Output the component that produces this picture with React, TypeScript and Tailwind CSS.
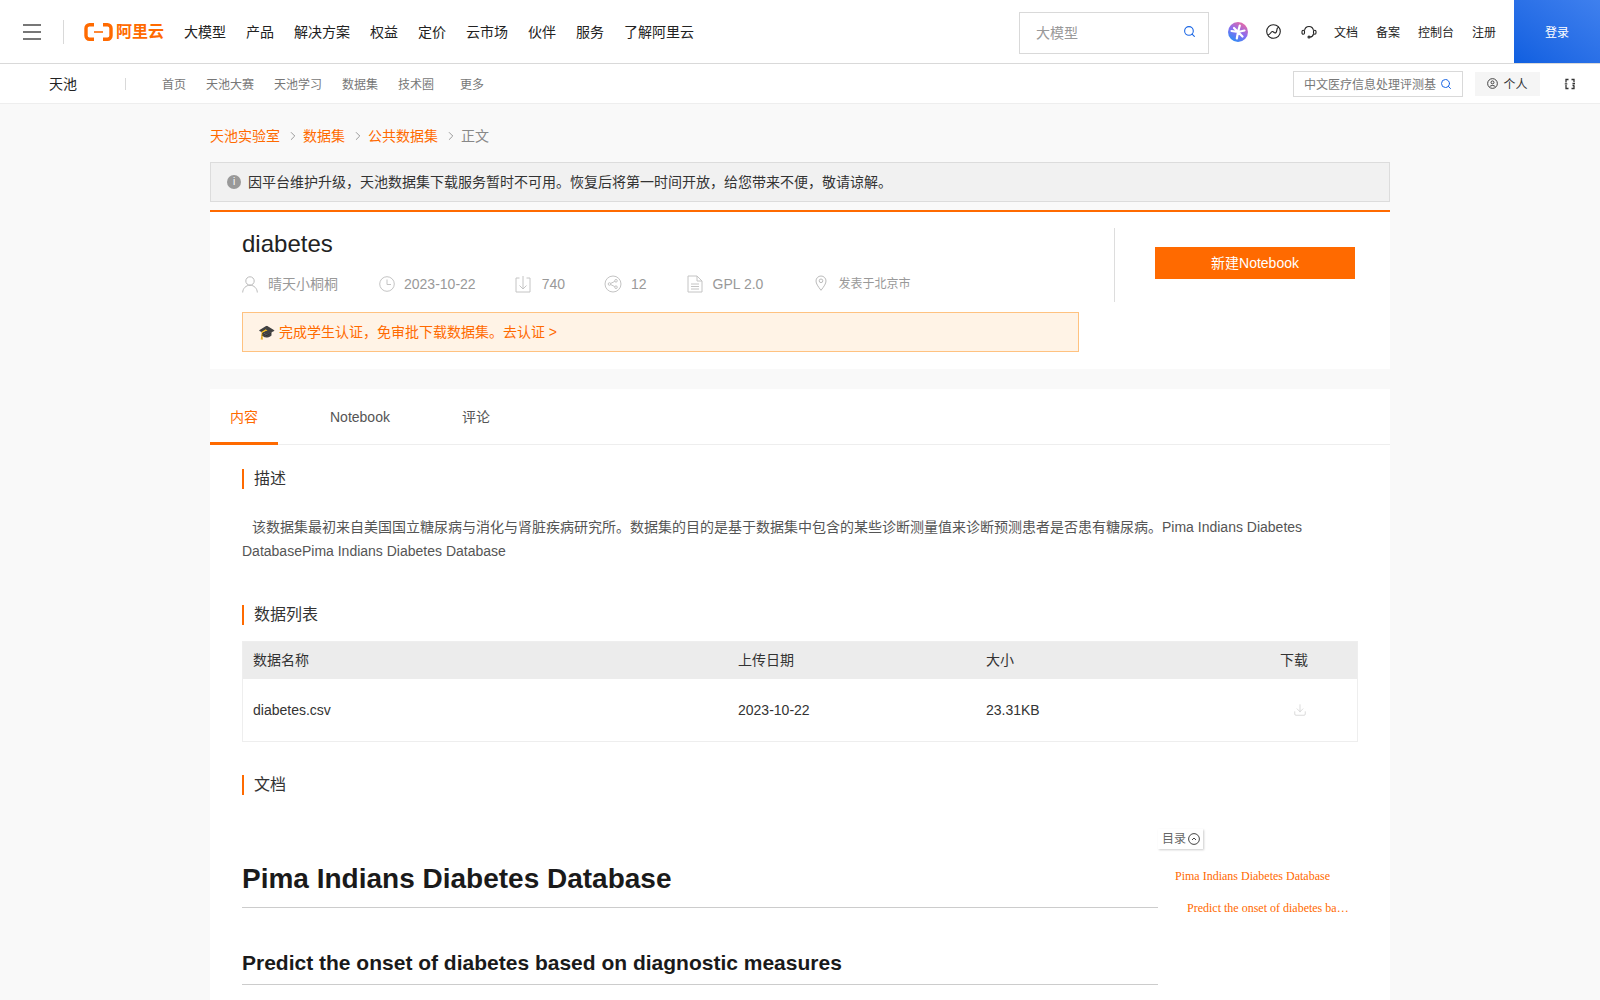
import { Search, ChevronRight, Download } from "lucide-react";

const mainNav = ["大模型", "产品", "解决方案", "权益", "定价", "云市场", "伙伴", "服务", "了解阿里云"];
const subNav = [
	{ title: "首页", cls: "ml-[36px]" },
	{ title: "天池大赛", cls: "ml-[20px]" },
	{ title: "天池学习", cls: "ml-[20px]" },
	{ title: "数据集", cls: "ml-[20px]" },
	{ title: "技术圈", cls: "ml-[20px]" },
	{ title: "更多", cls: "ml-[26px]" },
];

const Logo = () => (
	<div className="flex items-center gap-[3px]">
		<svg width="29" height="18" viewBox="0 0 29 18" fill="none" stroke="#ff6a00" strokeWidth="3.400" className="shrink-0">
			<path d="M10 1.700H5.500a3.500 3.500 0 0 0-3.500 3.500v7.600a3.500 3.500 0 0 0 3.500 3.500H10" />
			<path d="M19 1.700h4.500a3.500 3.500 0 0 1 3.500 3.500v7.600a3.500 3.500 0 0 1-3.500 3.500H19" />
			<path d="M10 9h9" strokeWidth="1.600" />
		</svg>
		<span className="whitespace-nowrap text-[16px] font-bold leading-[18px] text-[#ff6a00]">阿里云</span>
	</div>
);

const SectionTitle = ({ title }: { title: string }) => (
	<h3 className="border-l-2 border-[#ff6a00] pl-[10px] text-[16px] leading-[20px] text-[#333]">{title}</h3>
);

export default function App() {
	return (
		<div className="h-[1000px] overflow-hidden bg-[#f9f9f9] font-['Liberation_Sans','Noto_Sans_CJK_SC',sans-serif] text-[14px] text-[#333]">
			<header className="flex h-[64px] items-center border-b border-[#d9d9d9] bg-white">
				<div className="ml-[23px] flex w-[18px] flex-col gap-[5px]">
					<span className="h-[2px] bg-[#777]" />
					<span className="h-[2px] bg-[#777]" />
					<span className="h-[2px] bg-[#777]" />
				</div>
				<span className="ml-[22px] h-[24px] w-px bg-[#d9d9d9]" />
				<div className="ml-[20px] w-[80px]">
					<Logo />
				</div>
				<nav className="ml-[20px] flex gap-[20px] pt-[2px] text-[14px] text-[#222]">
					{mainNav.map((item) => (
						<span key={item}>{item}</span>
					))}
				</nav>
				<div className="ml-auto mt-[2px] flex h-[42px] w-[190px] items-center justify-between border border-[#d9d9d9] pl-[16px] pr-[12px] text-[14px] text-[#999]">
					<span className="pt-[1px]">大模型</span>
					<Search size={13} className="-translate-y-[1px] text-[#1a66e5]" />
				</div>
				<svg width="20" height="20" viewBox="0 0 20 20" fill="none" className="ml-[19px] shrink-0">
					<defs>
						<linearGradient id="star" x1="15" y1="1" x2="5" y2="19" gradientUnits="userSpaceOnUse">
							<stop stopColor="#e56aa8" />
							<stop offset="0.5" stopColor="#8a6cf0" />
							<stop offset="1" stopColor="#2f8cf5" />
						</linearGradient>
					</defs>
					<circle cx="10" cy="10" r="10" fill="url(#star)" />
					<path d="M10 10L11.800 3.500M10 10L16.500 8.500M10 10L14.500 14.500M10 10L8.800 16.500M10 10L3.500 9M10 10L6 6" stroke="white" strokeWidth="2.200" strokeLinecap="round" />
				</svg>
				<svg width="15" height="15" viewBox="0 0 15 15" fill="none" stroke="#222" strokeWidth="1.100" className="ml-[18px] shrink-0">
					<circle cx="7.500" cy="7.500" r="6.800" />
					<path d="M2 11c1.500-.2 2.200-1.500 3-2.500S6.500 7 7.500 8s1.500 1.500 2.500.5.800-3 1.200-4 1-1.200 1.800-1.200" />
				</svg>
				<svg width="16" height="16" viewBox="0 0 16 16" fill="none" stroke="#222" strokeWidth="1.100" className="ml-[20px] shrink-0">
					<path d="M3.500 6.500C4 3.800 5.800 2.500 8 2.500s4 1.300 4.500 4M12.500 10c-.5 2-2 3-3.500 3" />
					<rect x="1" y="6.200" width="2.500" height="4" rx="1.200" />
					<rect x="12.500" y="6.200" width="2.500" height="4" rx="1.200" />
					<circle cx="8" cy="13" r="1" />
				</svg>
				<div className="ml-[17px] flex gap-[18px] pt-[2px] text-[12px] text-[#222]">
					<span>文档</span>
					<span>备案</span>
					<span>控制台</span>
					<span>注册</span>
				</div>
				<div className="ml-[18px] flex h-full w-[86px] items-center justify-center bg-gradient-to-tr from-[#0f5fe0] to-[#3f80ee] pt-[2px] text-[12px] text-white">
					登录
				</div>
			</header>

			<div className="flex h-[40px] items-center border-b border-[#eeeeee] bg-white">
				<span className="ml-[49px] w-[76px] pt-[2px] text-[14px] text-[#222]">天池</span>
				<span className="h-[12px] w-px bg-[#d9d9d9]" />
				{subNav.map((item) => (
					<span key={item.title} className={`${item.cls} pt-[2px] text-[12px] text-[#777]`}>
						{item.title}
					</span>
				))}
				<div className="ml-auto flex h-[26px] w-[170px] items-center justify-between border border-[#d9d9d9] pl-[10px] pr-[10px] text-[12px] text-[#777]">
					<span className="w-[132px] overflow-hidden whitespace-nowrap pt-[2px]">中文医疗信息处理评测基</span>
					<Search size={12} className="text-[#1a66e5]" />
				</div>
				<div className="ml-[12px] flex h-[24px] w-[65px] items-center justify-center gap-[5px] bg-[#f5f5f5] text-[12px] text-[#333]">
					<svg width="11" height="11" viewBox="0 0 12 12" fill="none" stroke="#333">
						<circle cx="6" cy="6" r="5.300" />
						<circle cx="6" cy="4.800" r="1.600" />
						<path d="M3 9.500c1-1.800 5-1.800 6 0" />
					</svg>
					<span className="pt-[2px]">个人</span>
				</div>
				<svg width="12" height="12" viewBox="0 0 12 12" fill="none" stroke="#333" strokeWidth="1.300" className="mx-[24px] shrink-0">
					<path d="M4.500 1.500H2v3M2 7v3.500h2.500M7.500 1.500H10V4M10 8v2.500H7.500" />
					<path d="M.8 5.800h2.500M8.500 5.500h2.500M8.500 7.500h2" />
				</svg>
			</div>

			<main className="mx-auto w-[1180px]">
				<div className="flex h-[58px] items-center pt-[6px] text-[14px] text-[#ff6a00]">
					<span>天池实验室</span>
					<ChevronRight size={14} strokeWidth={1.100} className="ml-[6px] mr-[3px] text-[#666]" />
					<span>数据集</span>
					<ChevronRight size={14} strokeWidth={1.100} className="ml-[6px] mr-[3px] text-[#666]" />
					<span>公共数据集</span>
					<ChevronRight size={14} strokeWidth={1.100} className="ml-[6px] mr-[3px] text-[#666]" />
					<span className="text-[#888]">正文</span>
				</div>

				<div className="flex h-[40px] items-center gap-[7px] border border-[#dcdcdc] bg-[#f1f1f1] pl-[16px] text-[14px] text-[#333]">
					<span className="flex h-[14px] w-[14px] items-center justify-center rounded-full bg-[#999] text-[10px] leading-none text-white">
						i
					</span>
					因平台维护升级，天池数据集下载服务暂时不可用。恢复后将第一时间开放，给您带来不便，敬请谅解。
				</div>

				<section className="mt-[8px] flex h-[159px] border-t-2 border-[#ff6a00] bg-white pl-[32px]">
					<div className="w-[872px] pt-[15px]">
						<h1 className="text-[24px] leading-[34px] text-[#222]">diabetes</h1>
						<div className="mt-[12px] flex h-[22px] items-center text-[14px] text-[#999]">
							<svg width="16" height="17" viewBox="0 0 16 17" fill="none" stroke="#bbb">
								<circle cx="8" cy="5" r="4.200" />
								<path d="M.7 16.500c0-4 3.300-7.300 7.300-7.300s7.300 3.300 7.300 7.300" />
							</svg>
							<span className="ml-[10px]">晴天小桐桐</span>
							<svg width="16" height="16" viewBox="0 0 16 16" fill="none" stroke="#c4c4c4" className="ml-[41px]">
								<circle cx="8" cy="8" r="7.300" />
								<path d="M8 3.500V8.500H12" />
							</svg>
							<span className="ml-[9px]">2023-10-22</span>
							<svg width="16" height="18" viewBox="0 0 16 18" fill="none" stroke="#c4c4c4" className="ml-[39px]">
								<path d="M4.500 3H1v14h14V3h-3.500M8 1v13M4.500 10.500L8 14l3.500-3.500" />
							</svg>
							<span className="ml-[11px]">740</span>
							<svg width="18" height="18" viewBox="0 0 18 18" fill="none" stroke="#c4c4c4" className="ml-[39px]">
								<circle cx="9" cy="9" r="8" />
								<circle cx="5.500" cy="9" r="1.300" />
								<circle cx="12" cy="5.800" r="1.300" />
								<circle cx="12" cy="12.200" r="1.300" />
								<path d="M6.700 8.400l4.100-2M6.700 9.600l4.100 2" />
							</svg>
							<span className="ml-[9px]">12</span>
							<svg width="16" height="18" viewBox="0 0 16 18" fill="none" stroke="#c4c4c4" className="ml-[40px]">
								<path d="M1 1h9l5 5v11H1zM10 1v5h5M4 9h8M4 11.500h8M4 14h8" />
							</svg>
							<span className="ml-[10px]">GPL 2.0</span>
							<svg width="12" height="16" viewBox="0 0 12 16" fill="none" stroke="#bbb" className="ml-[52px] -translate-y-[1px]">
								<path d="M6 15.300C3 11.500 1 8.500 1 6a5 5 0 0 1 10 0c0 2.500-2 5.500-5 9.300z" />
								<circle cx="6" cy="5.800" r="1.800" />
							</svg>
							<span className="ml-[11px] text-[12px]">发表于北京市</span>
						</div>
						<div className="mt-[17px] flex h-[40px] w-[837px] items-center border border-[#ffc280] bg-[#fff3e6] pl-[15px] text-[14px] text-[#ff6a00]">
							🎓 完成学生认证，免审批下载数据集。去认证 &gt;
						</div>
					</div>
					<div className="mt-[16px] h-[74px] flex-1 border-l border-[#dddddd] pl-[40px] pt-[19px]">
						<button type="button" className="h-[32px] w-[200px] bg-[#ff6a00] text-[14px] text-white">
							新建Notebook
						</button>
					</div>
				</section>

				<section className="mt-[20px] bg-white pb-[40px]">
					<div className="flex h-[56px] border-b border-[#eeeeee] text-[14px] text-[#555]">
						<span className="flex h-[56px] w-[68px] items-center justify-center border-b-[3px] border-[#ff6a00] pt-[3px] text-[#ff6a00]">
							内容
						</span>
						<span className="ml-[52px] flex items-center pt-[1px]">Notebook</span>
						<span className="ml-[72px] flex items-center pt-[1px]">评论</span>
					</div>
					<div className="px-[32px] pt-[24px]">
						<SectionTitle title="描述" />
						<p className="mt-[26px] text-[14px] leading-[24px] text-[#555]">
							<span className="ml-[10px]" />该数据集最初来自美国国立糖尿病与消化与肾脏疾病研究所。数据集的目的是基于数据集中包含的某些诊断测量值来诊断预测患者是否患有糖尿病。Pima Indians Diabetes DatabasePima Indians Diabetes Database
						</p>
						<div className="mt-[42px]">
							<SectionTitle title="数据列表" />
						</div>
						<div className="mt-[16px] w-[1116px] border border-[#eeeeee] text-[14px] text-[#333]">
							<div className="grid h-[37px] grid-cols-[485px_248px_294px_1fr] items-center bg-[#ececec] pl-[10px]">
								<span>数据名称</span>
								<span>上传日期</span>
								<span>大小</span>
								<span>下载</span>
							</div>
							<div className="grid h-[62px] grid-cols-[485px_248px_294px_1fr] items-center pl-[10px]">
								<span>diabetes.csv</span>
								<span>2023-10-22</span>
								<span>23.31KB</span>
								<Download size={14} strokeWidth={1.200} className="ml-[13px] text-[#ccc]" />
							</div>
						</div>
						<div className="mt-[33px]">
							<SectionTitle title="文档" />
						</div>
						<div className="flex">
							<article className="w-[916px] pt-[64px]">
								<h1 className="border-b border-[#cccccc] pb-[8px] text-[28px] font-bold leading-[40px] text-[#1a1a1a]">
									Pima Indians Diabetes Database
								</h1>
								<h2 className="mt-[39px] border-b border-[#cccccc] pb-[5px] text-[21px] font-bold leading-[32px] text-[#1a1a1a]">
									Predict the onset of diabetes based on diagnostic measures
								</h2>
							</article>
							<aside className="w-[200px] pt-[34px]">
								<div className="flex h-[20px] w-[45px] items-center gap-[2px] pl-[4px] text-[12px] text-[#666] shadow-[1px_1px_2px_rgba(0,0,0,0.2)]">
									目录
									<svg width="12" height="12" viewBox="0 0 12 12" fill="none" stroke="#444">
										<circle cx="6" cy="6" r="5.400" />
										<path d="M4 7l2-2 2 2" />
									</svg>
								</div>
								<div className="mt-[18px] pl-[17px] font-['Liberation_Serif',serif] text-[12px] text-[#ff6a00]">
									Pima Indians Diabetes Database
								</div>
								<div className="mt-[14px] w-[191px] truncate pl-[29px] font-['Liberation_Serif',serif] text-[12px] text-[#ff6a00]">
									Predict the onset of diabetes based on diagnostic measures
								</div>
							</aside>
						</div>
					</div>
				</section>
			</main>
		</div>
	);
}
